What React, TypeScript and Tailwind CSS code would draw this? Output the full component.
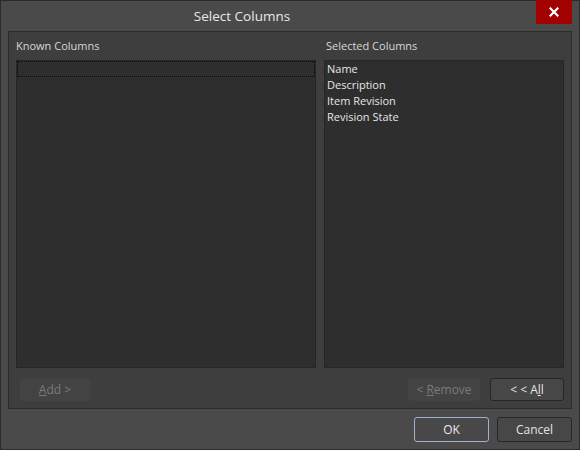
import React from 'react';

const font = { fontFamily: '"Open Sans", "Noto Sans", sans-serif' };

function DlgButton({ children, variant = 'normal', className = '' }: { children: React.ReactNode; variant?: 'normal' | 'disabled' | 'default'; className?: string }) {
  const styles = {
    normal: 'border-[#262626] bg-[#474747] text-[#e4e4e4]',
    disabled: 'border-transparent bg-[#434343] text-[#7a7a7a]',
    default: 'border-[#9fb2c6] bg-[#484848] text-[#e8e8e8]',
  }[variant];
  return (
    <div className={`flex items-center justify-center rounded-[3px] border text-[12px] ${styles} ${className}`}>
      {children}
    </div>
  );
}

export default function App() {
  const selected = ['Name', 'Description', 'Item Revision', 'Revision State'];

  return (
    <div style={font} className="w-[580px] h-[450px] bg-[#4a4a4a] border border-[#2b2b2b] flex flex-col">
      {/* Title bar */}
      <div className="relative h-[30px] flex items-center justify-center pr-[96px]">
        <span className="text-[13.5px] text-[#e8e8e8] mt-[1px]">Select Columns</span>
        <div className="absolute top-[-1px] right-[7px] w-[36px] h-[24px] bg-[#a30000] flex items-center justify-center">
          <svg width="10" height="10" viewBox="0 0 10 10">
            <path d="M1.5 1.5 L8.5 8.5 M8.5 1.5 L1.5 8.5" stroke="#ffffff" strokeWidth="2.2" strokeLinecap="square" />
          </svg>
        </div>
      </div>

      {/* Main panel */}
      <div className="mx-[7px] h-[378px] border border-[#2c2c2c] bg-[#3e3e3e] flex flex-col px-[7px] pt-[7px] pb-[7px]">
        <div className="flex gap-[8px] flex-1 min-h-0">
          <div className="w-[300px] flex flex-col">
            <div className="h-[14px] mb-[7px] text-[11px] leading-[14px] text-[#d8d8d8]">Known Columns</div>
            <div className="flex-1 bg-[#2e2e2e] border border-[#262626]">
              <div className="h-[16px] border border-dotted border-[#0a0a0a]" />
            </div>
          </div>
          <div className="flex-1 flex flex-col">
            <div className="h-[14px] mb-[7px] pl-[2px] text-[11px] leading-[14px] text-[#d8d8d8]">Selected Columns</div>
            <div className="flex-1 bg-[#2e2e2e] border border-[#262626] pl-[2px]">
              {selected.map(s => (
                <div key={s} className="h-[16px] text-[11px] leading-[16px] text-[#e6e6e6]">{s}</div>
              ))}
            </div>
          </div>
        </div>
        <div className="flex items-center mt-[10px] h-[23px]">
          <DlgButton variant="disabled" className="ml-[4px] w-[70px] h-[23px]">
            <span><span className="underline">A</span>dd &gt;</span>
          </DlgButton>
          <div className="flex-1" />
          <DlgButton variant="disabled" className="w-[72px] h-[23px]">
            <span>&lt; <span className="underline">R</span>emove</span>
          </DlgButton>
          <DlgButton className="ml-[10px] w-[74px] h-[23px]">
            <span>&lt; &lt; A<span className="underline">l</span>l</span>
          </DlgButton>
        </div>
      </div>

      {/* Footer */}
      <div className="flex justify-end gap-[8px] pr-[7px] pt-[8px]">
        <DlgButton variant="default" className="w-[75px] h-[25px]">OK</DlgButton>
        <DlgButton className="w-[75px] h-[25px]">Cancel</DlgButton>
      </div>
    </div>
  );
}
